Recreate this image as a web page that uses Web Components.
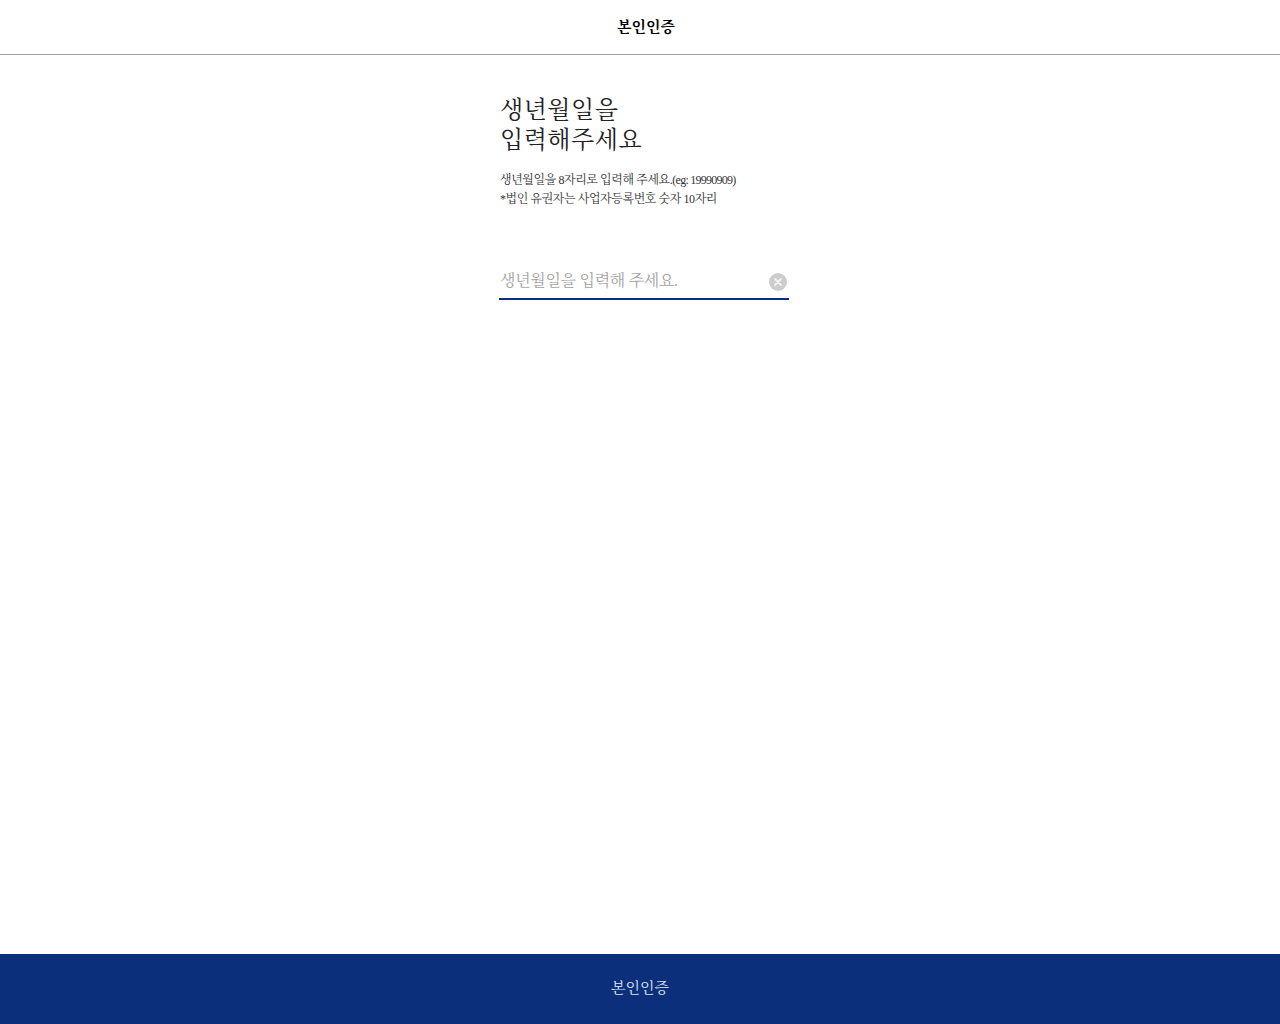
<!DOCTYPE html>
<html lang="ko">
<head>
<meta charset="utf-8">
<title>본인인증</title>
<style>
  html, body { height: 100%; }
  body {
    margin: 0;
    background: #fff;
    font-family: "Liberation Serif", "Noto Serif CJK KR", "Noto Sans CJK KR", serif;
  }
  auth-page { height: 1024px; }
</style>
</head>
<body>

<auth-page>
  <auth-header slot="header">본인인증</auth-header>
  <auth-birth-form>
    <span slot="title">생년월일을<br>입력해주세요</span>
    <span slot="desc">생년월일을 8자리로 입력해 주세요.<span style="letter-spacing:-0.75px">(eg: 19990909)</span><br>*법인 유권자는 사업자등록번호 숫자 10자리</span>
  </auth-birth-form>
  <auth-submit slot="footer">본인인증</auth-submit>
</auth-page>

<script>
class AuthPage extends HTMLElement {
  constructor() {
    super();
    this.shadow = this.attachShadow({ mode: "open" });
  }
  connectedCallback() {
    this.shadow.innerHTML = `
      <style>
        :host { display: flex; flex-direction: column; }
        main { flex: 1; display: flex; justify-content: center; padding-left: 8px; }
      </style>
      <slot name="header"></slot>
      <main><slot></slot></main>
      <slot name="footer"></slot>
    `;
  }
}

class AuthHeader extends HTMLElement {
  constructor() {
    super();
    this.shadow = this.attachShadow({ mode: "open" });
  }
  connectedCallback() {
    this.shadow.innerHTML = `
      <style>
        :host {
          display: flex;
          align-items: center;
          justify-content: center;
          box-sizing: border-box;
          height: 55px;
          padding: 0 0 3px 12px;
          border-bottom: 1px solid #a0a0a0;
          font-size: 15px;
          font-weight: 700;
          color: #000;
        }
      </style>
      <slot></slot>
    `;
  }
}

class AuthBirthForm extends HTMLElement {
  constructor() {
    super();
    this.shadow = this.attachShadow({ mode: "open" });
  }
  connectedCallback() {
    this.shadow.innerHTML = `
      <style>
        :host { display: block; width: 290px; padding-top: 40px; color: #222; }
        h1 { margin: 0 0 0 1px; font-size: 24px; line-height: 30px; font-weight: 400; letter-spacing: 0.5px; }
        p { margin: 16px 0 0 1px; font-size: 12px; line-height: 19px; letter-spacing: -0.42px; white-space: nowrap; color: #333; }
        .field {
          display: flex;
          align-items: center;
          margin-top: 50px;
          height: 41px;
          box-sizing: border-box;
          padding: 4px 2px 0 1px;
          border-bottom: 2px solid #0b2f7a;
        }
        input {
          flex: 1;
          min-width: 0;
          border: 0;
          outline: 0;
          padding: 0;
          background: none;
          font: inherit;
          font-size: 16px;
          letter-spacing: -0.3px;
          color: #222;
        }
        input::placeholder { color: #a3a3a3; opacity: 1; }
        button { display: flex; border: 0; padding: 0; margin-top: 2px; background: none; }
      </style>
      <h1><slot name="title"></slot></h1>
      <p><slot name="desc"></slot></p>
      <div class="field">
        <input type="text" placeholder="생년월일을 입력해 주세요.">
        <button type="button" aria-label="지우기">
          <svg width="18" height="18" viewBox="0 0 18 18">
            <circle cx="9" cy="9" r="9" fill="#cdcdcd"/>
            <path d="M6 6l6 6M12 6l-6 6" stroke="#f4f4f4" stroke-width="1.8" stroke-linecap="round"/>
          </svg>
        </button>
      </div>
    `;
  }
}

class AuthSubmit extends HTMLElement {
  constructor() {
    super();
    this.shadow = this.attachShadow({ mode: "open" });
  }
  connectedCallback() {
    this.shadow.innerHTML = `
      <style>
        :host {
          display: flex;
          align-items: center;
          justify-content: center;
          box-sizing: border-box;
          height: 70px;
          padding-bottom: 5px;
          background: #0b2f7a;
          color: #dfe6f5;
          font-size: 15px;
        }
      </style>
      <slot></slot>
    `;
  }
}

customElements.define("auth-page", AuthPage);
customElements.define("auth-header", AuthHeader);
customElements.define("auth-birth-form", AuthBirthForm);
customElements.define("auth-submit", AuthSubmit);
</script>
</body>
</html>
